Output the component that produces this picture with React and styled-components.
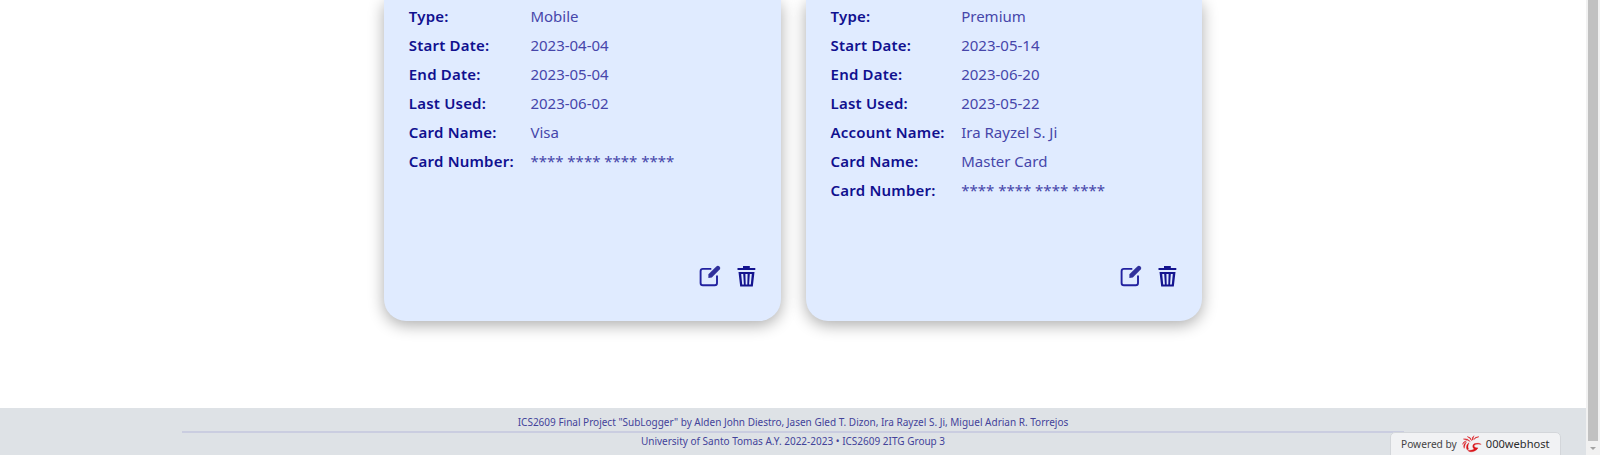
import React from "react";
import styled, { createGlobalStyle } from "styled-components";

const Global = createGlobalStyle`
  * { box-sizing: border-box; }
  html, body { margin: 0; height: 100%; overflow: hidden; background: #fff; }
  body { font-family: "Noto Sans", sans-serif; color: #00008b; }
`;

const Screen = styled.div`
  display: flex;
  width: 1600px;
  height: 455px;
  overflow: hidden;
`;

const Page = styled.div`
  flex: 1;
  min-width: 0;
  display: flex;
  flex-direction: column;
`;

const Cards = styled.main`
  flex: 1;
  display: flex;
  align-items: flex-start;
  gap: 25px;
  padding-left: 383.8px;
`;

const Card = styled.article`
  width: 396.8px;
  height: 321px;
  display: flex;
  flex-direction: column;
  justify-content: space-between;
  padding: 1.6px 25px 34px;
  background: #e0ebff;
  border-radius: 0 0 22px 22px;
  box-shadow: 0 4px 16px rgba(0, 0, 0, 0.33);
`;

const Details = styled.dl`
  margin: 0;
  display: grid;
  grid-template-columns: ${(p) => p.$labelWidth}px 1fr;
  grid-auto-rows: 29.1px;
  align-items: center;
  white-space: nowrap;
`;

const Label = styled.dt`
  font-size: 15px;
  font-weight: 600;
  letter-spacing: 0.2px;
  line-height: 29px;
  color: #10108f;
`;

const Value = styled.dd`
  margin: 0;
  font-size: 15px;
  font-weight: 400;
  line-height: 29px;
  color: #4646aa;
`;

const Actions = styled.div`
  display: flex;
  justify-content: flex-end;
  gap: 16px;

  svg { display: block; }
`;

const Footer = styled.footer`
  height: 47px;
  padding: 0 182px;
  background: #dee2e6;
  text-align: center;
  font-size: 10px;
  white-space: nowrap;
  color: #43439a;
`;

const FooterLine = styled.div`
  height: ${(p) => p.$height}px;
  line-height: ${(p) => p.$line}px;
  border-bottom: ${(p) => (p.$rule ? "2px solid #cacde0" : "0")};
`;

const Scrollbar = styled.aside`
  width: 14px;
  flex: none;
  display: flex;
  flex-direction: column;
  align-items: center;
  background: #f1f1f1;
  gap: 6px;
`;

const Thumb = styled.div`
  width: 10px;
  height: 441px;
  background: #c1c1c1;
`;

const Arrow = styled.div`
  border: 3px solid transparent;
  border-top-color: #a3a3a3;
  border-bottom: 0;
`;

const HostBadge = styled.div`
  position: fixed;
  left: 1390px;
  top: 432px;
  width: 171px;
  height: 24px;
  display: flex;
  align-items: center;
  padding: 0 0 1px 10px;
  background: #f1f2f4;
  border: 1px solid #d3d6da;
  border-radius: 5px 5px 0 0;
  color: #444;
  font-size: 10.2px;
  white-space: nowrap;

  svg { margin: 0 4px 0 5px; flex: none; }
`;

const HostName = styled.span`
  font-size: 11.1px;
  color: #2c2c2c;
`;

const EditIcon = () => (
  <svg width="22" height="22" viewBox="0 0 22 22" fill="none">
    <path d="M12.3 3.9H3.9Q1.6 3.9 1.6 6.2V18Q1.6 20.3 3.9 20.3H15.7Q18 20.3 18 18V10.6" stroke="#2222a0" strokeWidth="1.9" />
    <path d="M9.4 12.9V9.3L17.3 1.4Q18.9.1 20.5 1.5 22 3 20.7 4.5L12.8 12.6Z" fill="#30309b" />
  </svg>
);

const TrashIcon = () => (
  <svg width="19" height="22" viewBox="0 0 19 22" fill="#14148f">
    <path d="M.5 2.9H6V1.1H12.8V2.9H18.3V5H.5Z" />
    <path fillRule="evenodd" d="M1.5 7H17.5L15.8 21.4H3.2ZM4.2 9 5.2 19.4H6.9L6.2 9ZM8.4 9 8.7 19.4H10.3L10.6 9ZM12.8 9 12.1 19.4H13.8L14.8 9Z" />
  </svg>
);

const HostLogo = () => (
  <svg width="20" height="18" viewBox="0 0 20 18" fill="#d9151a" stroke="#d9151a" strokeWidth="0.35">
    <path d="M19.2 9.3Q14 8.6 12.2 10.2C11.6 11.6 12.8 12.8 16 12.9 13.8 16.8 8.2 17.9 5.7 15.4 9.2 15.5 11.1 14.9 12.2 14 9.9 12.3 10.6 9 13 8.5Q16.9 7.7 19.2 9.3Z" />
    <path d="M5 14.7C3.7 12 4.7 9.2 7 7.8 5.9 10.3 5.6 12 6.5 14.2ZM2.2 13.4C.9 10.6 2 8.4 4.5 7 3.1 9.2 2.7 11 2.2 13.4ZM.3 9.5Q1.2 6.4 4.5 5.7 2.2 7.1.3 9.5ZM1.3 4Q5.5 2.8 8.3 6.6 5.4 4.7 1.3 4ZM5.2 1.5Q9 2 9.6 5.7 8 3 5.2 1.5ZM10.2 5.1Q9.6 2.2 12 .7 11 3 11.1 4.8ZM11.9 4.6Q12.7 1.5 17 1.7 13.4 2.5 11.9 4.6Z" />
  </svg>
);

const subscriptions = [
  {
    labelWidth: 121.6,
    rows: [
      ["Type:", "Mobile"],
      ["Start Date:", "2023-04-04"],
      ["End Date:", "2023-05-04"],
      ["Last Used:", "2023-06-02"],
      ["Card Name:", "Visa"],
      ["Card Number:", "**** **** **** ****"],
    ],
  },
  {
    labelWidth: 130.6,
    rows: [
      ["Type:", "Premium"],
      ["Start Date:", "2023-05-14"],
      ["End Date:", "2023-06-20"],
      ["Last Used:", "2023-05-22"],
      ["Account Name:", "Ira Rayzel S. Ji"],
      ["Card Name:", "Master Card"],
      ["Card Number:", "**** **** **** ****"],
    ],
  },
];

const SubscriptionCard = ({ labelWidth, rows }) => (
  <Card>
    <Details $labelWidth={labelWidth}>
      {rows.map(([label, value]) => (
        <React.Fragment key={label}>
          <Label>{label}</Label>
          <Value>{value}</Value>
        </React.Fragment>
      ))}
    </Details>
    <Actions>
      <EditIcon />
      <TrashIcon />
    </Actions>
  </Card>
);

export default function App() {
  return (
    <Screen>
      <Global />
      <Page>
        <Cards>
          {subscriptions.map((s) => (
            <SubscriptionCard key={s.labelWidth} {...s} />
          ))}
        </Cards>
        <Footer>
          <FooterLine $height={25} $line={28} $rule>
            ICS2609 Final Project "SubLogger" by Alden John Diestro, Jasen Gled T. Dizon, Ira Rayzel S. Ji, Miguel Adrian R. Torrejos
          </FooterLine>
          <FooterLine $height={20} $line={17}>
            University of Santo Tomas A.Y. 2022-2023 • ICS2609 2ITG Group 3
          </FooterLine>
        </Footer>
      </Page>
      <Scrollbar>
        <Thumb />
        <Arrow />
      </Scrollbar>
      <HostBadge>
        Powered by
        <HostLogo />
        <HostName>000webhost</HostName>
      </HostBadge>
    </Screen>
  );
}
